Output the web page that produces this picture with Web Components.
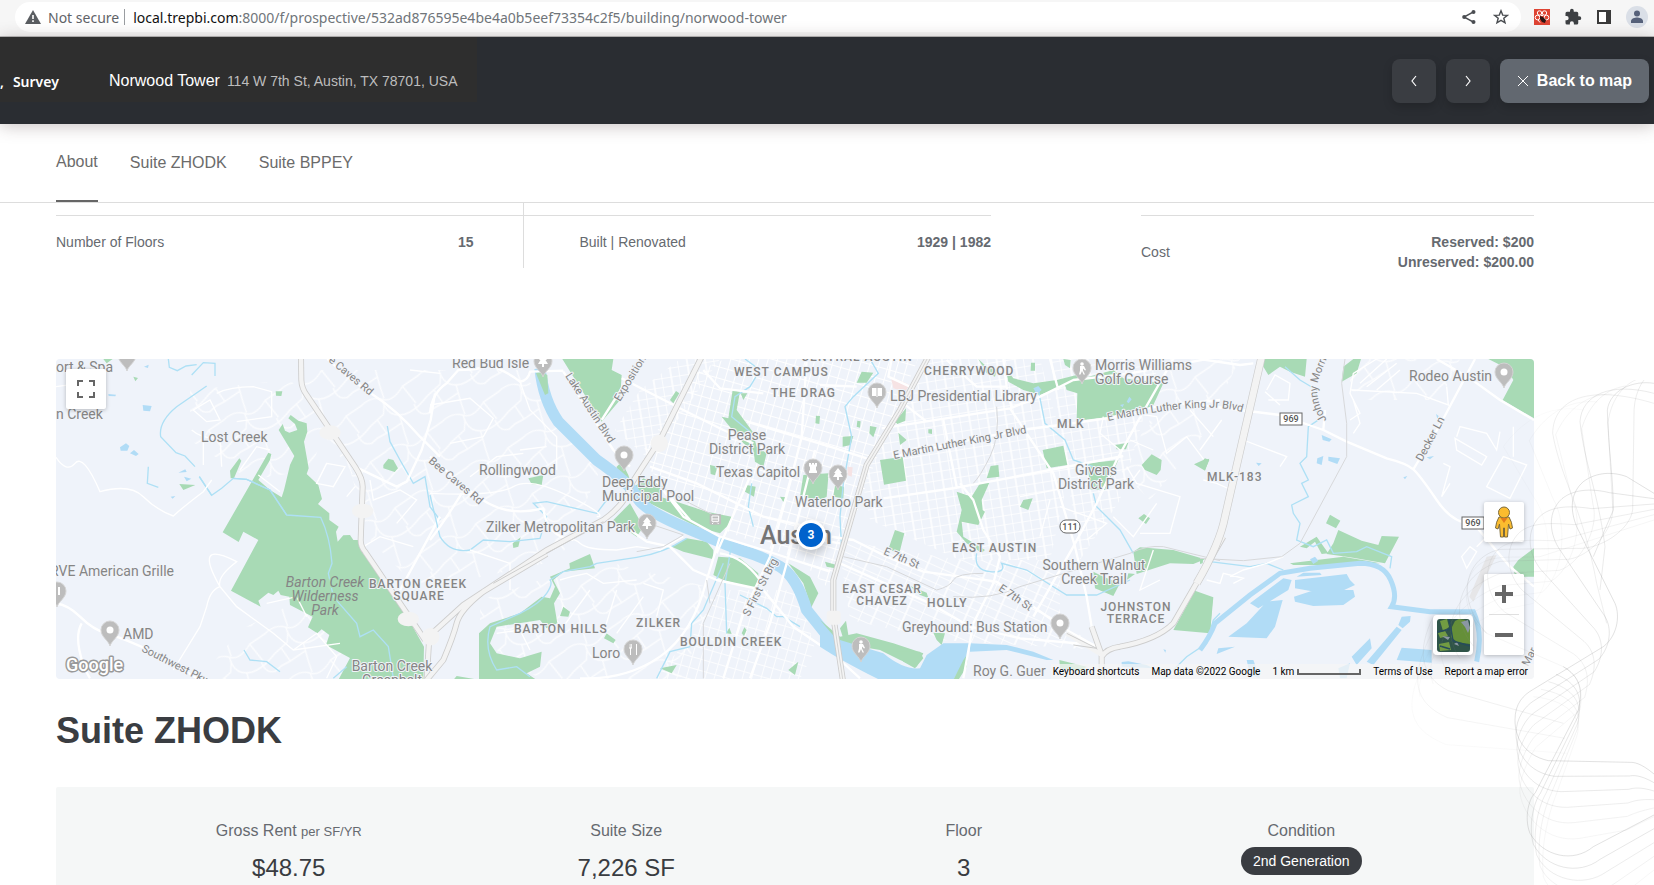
<!DOCTYPE html>
<html lang="en">
<head>
<meta charset="utf-8">
<title>Norwood Tower</title>
<style>
html,body{margin:0;height:100%}
body{font-family:"Liberation Sans",Arial,sans-serif;color:#666a70;background:#fff}
</style>
</head>
<body>
<survey-page></survey-page>
<script>
const define = (name, html, setup) => customElements.define(name, class extends HTMLElement {
  constructor() {
    super();
    const t = document.createElement('template');
    t.innerHTML = html;
    this.attachShadow({ mode: 'open' }).append(t.content.cloneNode(true));
    if (setup) setup(this.shadowRoot, this);
  }
});

/* ---------- browser toolbar ---------- */
define('browser-bar', `
<style>
:host{display:flex;align-items:flex-start;height:36px;background:#f6f6f6;border-bottom:1px solid #b9b9b9;font-family:"Noto Sans",sans-serif;font-size:14px;box-sizing:content-box}
form{flex:1;display:flex;align-items:center;height:30px;margin:2px 0 0 15px;padding:0 12px 0 10px;background:#fff;border-radius:15px;color:#5f6368}
button{border:0;background:none;padding:0;margin:0;display:flex;align-items:center;font:inherit;color:inherit}
.sec{gap:7px}
.bar{width:1px;height:16px;background:#9a9da1;margin:0 8px 0 5px}
label{color:#111}
input{flex:1;min-width:0;border:0;padding:0;outline:0;background:none;font:inherit;color:#70757a}
.in{gap:16px;display:flex}
.ext{display:flex;align-items:center;gap:14px;height:34px;padding:0 6px 0 13px}
svg{display:block}
</style>
<form>
 <button class="sec" type="button"><svg width="16" height="14" viewBox="0 0 16 14"><path d="M8 0L16 14H0z" fill="#5a5d61"/><path d="M7.2 5h1.6v4H7.2zM7.2 10.3h1.6v1.7H7.2z" fill="#fff"/></svg>Not secure</button>
 <span class="bar"></span>
 <label for="u">local.trepbi.com</label><input id="u" value=":8000/f/prospective/532ad876595e4be4a0b5eef73354c2f5/building/norwood-tower">
 <span class="in">
 <button type="button" aria-label="Share"><svg width="16" height="16" viewBox="0 0 16 16" fill="#4a4d51"><path d="M12.5 2.8L3 8l9.500 5.200" fill="none" stroke="#4a4d51" stroke-width="1.500"/><circle cx="12.500" cy="3" r="2"/><circle cx="3.200" cy="8" r="2"/><circle cx="12.500" cy="13" r="2"/></svg></button>
 <button type="button" aria-label="Bookmark"><svg width="16" height="16" viewBox="0 0 16 16"><path d="M8 1.800l1.700 4.300 4.600.3-3.500 2.900 1.200 4.500L8 11.300l-4 2.500 1.200-4.500L1.700 6.400l4.600-.3z" fill="none" stroke="#4a4d51" stroke-width="1.400"/></svg></button>
 </span>
</form>
<div class="ext">
 <button aria-label="Inspector extension"><svg width="16" height="16" viewBox="0 0 16 16"><path fill="#de4433" d="M0 0h16v16H0z"/><g fill="none" stroke="#fff"><circle cx="5.500" cy="4" r="2.200"/><circle cx="10.500" cy="4" r="2.200"/><circle cx="3.500" cy="8.500" r="2.300"/><circle cx="12.500" cy="8.500" r="2.300"/><path d="M4 11l2 2.500M7 6.500h2"/></g><path d="M6 7l3 1 3 3-1 3-3-1-2-3z" fill="#2b1514"/></svg></button>
 <button aria-label="Extensions"><svg width="18" height="18" viewBox="0 0 24 24" fill="#3d4043"><path d="M20.500 11H19V7a2 2 0 0 0-2-2h-4V3.500a2.500 2.500 0 0 0-5 0V5H4a2 2 0 0 0-2 2v3.800h1.500a2.700 2.700 0 0 1 0 5.400H2V20a2 2 0 0 0 2 2h3.800v-1.500a2.700 2.700 0 0 1 5.400 0V22H17a2 2 0 0 0 2-2v-4h1.500a2.500 2.500 0 0 0 0-5z"/></svg></button>
 <button aria-label="Side panel"><svg width="16" height="16" viewBox="0 0 16 16"><path d="M1 1h14v14H1z" fill="#3a3a3a"/><path d="M3 3h7v10H3z" fill="#fff"/></svg></button>
 <button aria-label="Profile"><svg width="22" height="22" viewBox="0 0 22 22"><circle cx="11" cy="11" r="11" fill="#dadfe7"/><circle cx="11" cy="7.500" r="3" fill="#56617a"/><path d="M5 17v-2c0-2.500 4-3.500 6-3.500s6 1 6 3.500v2z" fill="#56617a"/></svg></button>
</div>`);

/* ---------- dark header ---------- */
define('icon-button', `
<style>
:host{display:block}
button{display:flex;align-items:center;justify-content:center;gap:8px;height:44px;min-width:44px;padding:0;border:0;border-radius:8px;background:#3a3d42;color:#fff;font:bold 16px "Liberation Sans",Arial,sans-serif;box-shadow:0 4px 10px rgba(0,0,0,.18)}
:host([wide]) button{background:#626870;padding:0 17px}
</style><button><slot></slot></button>`, (root, el) => {
  const l = el.getAttribute('label'); if (l) root.querySelector('button').setAttribute('aria-label', l);
});

define('survey-header', `
<style>
:host{display:flex;align-items:center;height:87px;padding-right:5px;background:linear-gradient(90deg,#2e2e2e 477px,#2a2d32 477px);background-size:100% 65px;background-repeat:no-repeat;background-color:#2a2d32;position:relative;z-index:2;box-shadow:0 2px 16px rgba(60,40,40,.28)}
.brand{font:600 14px/20px "Noto Sans",sans-serif;color:#fff;display:flex;gap:9px;width:109px;box-sizing:border-box;padding-top:2px}
h1{margin:0;font-size:16px;font-weight:400;color:#fff;line-height:20px}
p{margin:0 auto 0 7px;font-size:14px;line-height:20px;color:#bdbdbd}
nav{display:flex;gap:10px}
svg{display:block;fill:none;stroke:#fff}
</style>
<div class="brand"><span>,</span><span>Survey</span></div>
<h1>Norwood Tower</h1><p>114 W 7th St, Austin, TX 78701, USA</p>
<nav>
<icon-button label="Previous building"><svg width="8" height="12" viewBox="0 0 8 12" stroke-width="1.200"><path d="M6 1L2 6l4 5"/></svg></icon-button>
<icon-button label="Next building"><svg width="8" height="12" viewBox="0 0 8 12" stroke-width="1.200"><path d="M2 1l4 5-4 5"/></svg></icon-button>
<icon-button wide><svg width="12" height="12" viewBox="0 0 12 12"><path d="M1 1l10 10M11 1L1 11"/></svg>Back to map</icon-button>
</nav>`);

/* ---------- section tabs ---------- */
define('section-tabs', `
<style>
:host{display:flex;gap:32px;height:78px;padding:0 56px;border-bottom:1px solid #ddd;background:#fff}
a{display:block;line-height:78px;font-size:16px;color:#6b6b6b;text-decoration:none}
a.on{line-height:76px;height:76px;border-bottom:2px solid #666}
</style>
<a class="on" href="#about">About</a><a href="#zhodk">Suite ZHODK</a><a href="#bppey">Suite BPPEY</a>`);

/* ---------- building facts ---------- */
define('fact-row', `
<style>
:host{display:block;box-sizing:border-box;padding-top:12px}
dl{margin:0;display:flex;justify-content:space-between;align-items:center;border-top:1px solid #ddd;padding-top:16px;font-size:14px;line-height:20px}
dd{margin:0;font-weight:bold;text-align:right}
</style><dl><dt><slot name="label"></slot></dt><dd><slot></slot></dd></dl>`);

define('fact-grid', `
<style>
:host{display:grid;grid-template-columns:935fr 393fr;grid-template-rows:65px;column-gap:150px}
.pair{display:grid;grid-template-columns:1fr 1fr}
.a{border-right:1px solid #ddd}
.pair dl{margin:12px 0 0;display:flex;justify-content:space-between;border-top:1px solid #ddd;padding:16px 0 0;font-size:14px;line-height:20px}
.pair .a dl{padding-right:49px}.pair .b dl{padding-left:56px}
dd{margin:0;font-weight:bold}
</style>
<div class="pair"><div class="a"><dl><dt>Number of Floors</dt><dd>15</dd></dl></div><div class="b"><dl><dt>Built | Renovated</dt><dd>1929 | 1982</dd></dl></div></div>
<fact-row><span slot="label">Cost</span>Reserved: $200<br>Unreserved: $200.00</fact-row>`);

/* ---------- map ---------- */
const pins = [[127,355,''],[110,630,'o'],[57,591,'H'],[543,361,'t'],[624,455,'o'],[647,523,'t'],[813,468,'c'],[633,649,'f'],[877,392,'b'],[1082,368,'g'],[838,474,'t'],[1060,623,'o'],[861,646,'g'],[1504,372,'o']];
const glyph = {
  '':'', o:'<circle r="3.500"/>', t:'<path d="M0-6L4-1H2.500L5 3H1v3h-2V3h-4L-2.500-1H-4z"/>', c:'<path d="M-4-5h2v1.500h1V-5h2v1.500h1V-5h2v3L3-1v3l1 1v2h-8V3l1-1v-3l-1-1z"/>',
  f:'<path d="M-4-5v4l1 1v6h1V0l1-1v-4h-.7v3.500h-.8V-5h-.8v3.500h-.7V-5zM3-5v11h1V-5z"/>', b:'<path d="M-5-4h4l1 1 1-1h4v8H1L0 5l-1-1h-4z"/><path d="M0-3v7" stroke="#c0c0c0"/>',
  g:'<circle cy="-4" r="1.800"/><path d="M-2-2h4l2 4-1 .5-2-2v2l2 4H1.500L0 3l-1.500 3.500H-3l1-4z"/>', H:'<path d="M1-4h2v8H1z"/>'
};
const pinSvg = pins.map(([x,y,k]) => `<g transform="translate(${x} ${y})"><path d="M0 16C-1 11-9 7-9 0A9 9 0 0 1 9 0C9 7 1 11 0 16z" fill="#bdbdbd" stroke="#d4d4d4" stroke-width="1"/><g fill="#fff">${glyph[k]}</g></g>`).join('');

const T = (x, y, s, c = 'p', a = '', r = 0) => `<text class="${c}" ${a ? `text-anchor="${a}"` : ''} ${r ? `transform="translate(${x} ${y}) rotate(${r})"` : `x="${x}" y="${y}"`}>${s}</text>`;
const labels = [
 T(56,372,'ort &amp; Spa'),T(56,419,'n Creek'),T(201,442,'Lost Creek'),T(174,576,'RVE American Grille','p','end'),T(123,639,'AMD'),
 T(325,587,'Barton Creek','p i','middle'),T(325,601,'Wilderness','p i','middle'),T(325,615,'Park','p i','middle'),T(392,671,'Barton Creek','p','middle'),T(392,685,'Greenbelt','p','middle'),
 T(418,588,'BARTON CREEK','n','middle'),T(419,600,'SQUARE','n','middle'),T(452,368,'Red Bud Isle'),T(479,475,'Rollingwood'),T(602,487,'Deep Eddy'),T(602,501,'Municipal Pool'),
 T(486,532,'Zilker Metropolitan Park'),T(747,440,'Pease','p','middle'),T(747,454,'District Park','p','middle'),T(716,477,'Texas Capitol'),T(795,507,'Waterloo Park'),
 T(734,376,'WEST CAMPUS','n'),T(771,397,'THE DRAG','n'),T(857,361,'CENTRAL AUSTIN','n','middle'),T(636,627,'ZILKER','n'),T(514,633,'BARTON HILLS','n'),T(680,646,'BOULDIN CREEK','n'),T(592,658,'Loro'),
 T(924,375,'CHERRYWOOD','n'),T(890,401,'LBJ Presidential Library'),T(1095,370,'Morris Williams'),T(1095,384,'Golf Course'),T(1057,428,'MLK','n'),
 T(1096,475,'Givens','p','middle'),T(1096,489,'District Park','p','middle'),T(952,552,'EAST AUSTIN','n'),T(1094,570,'Southern Walnut','p','middle'),T(1094,584,'Creek Trail','p','middle'),
 T(882,593,'EAST CESAR','n','middle'),T(882,605,'CHAVEZ','n','middle'),T(927,607,'HOLLY','n'),T(1136,611,'JOHNSTON','n','middle'),T(1136,623,'TERRACE','n','middle'),
 T(902,632,'Greyhound: Bus Station'),T(973,676,'Roy G. Guer'),T(1409,381,'Rodeo Austin'),T(1207,481,'MLK-183','n'),T(760,544,'Austin','city'),
 T(141,651,'Southwest Pkwy','r','',27),T(328,361,'e Caves Rd','r','',40),T(428,462,'Bee Caves Rd','r','',40),T(565,376,'Lake Austin Blvd','r','',57),T(620,402,'Exposition','r','',-59),
 T(749,617,'S First St Brg','r','',-63),T(894,459,'E Martin Luther King Jr Blvd','r','',-11),T(883,554,'E 7th St','r','',23),T(998,590,'E 7th St','r','',34),T(1422,462,'Decker Ln','r','',-62),T(1528,667,'Mar','r','',-62),
 '<text class="r"><textPath href="#mlk">E Martin Luther King Jr Blvd</textPath></text><text class="r"><textPath href="#jm">Johnny Morris</textPath></text>'
].join('');

define('area-map', `
<style>
:host{display:block;position:relative;height:320px;border-radius:4px;overflow:hidden;background:#eff3fa;font-family:Roboto,sans-serif}
.canvas{display:block;width:100%;height:100%}
text{font-family:Roboto,sans-serif;fill:#858585;stroke:#f1f4f9;stroke-width:2px;paint-order:stroke;stroke-linejoin:round}
.p{font-size:14px}.i{font-style:italic;stroke:#a8dab5}.n{font-size:12px;font-weight:500;letter-spacing:1px}.r{font-size:11px}.city{font-size:25px;font-weight:500;fill:#757575}
.s{font-size:9px;fill:#555;stroke:none;font-weight:500}.logo{font-size:18px;font-weight:500;fill:#fff;stroke:#999;stroke-width:3px}
.g{fill:#a8dab5}.w{fill:#b1dcf6}.wl{fill:none;stroke:#aee0f5;stroke-width:4}.wb{fill:none;stroke:#b1dcf6}
.rd{fill:none;stroke:#fff;stroke-width:7;stroke-linejoin:round}.rm{fill:none;stroke:#fff;stroke-width:4}.hc{fill:none;stroke:#cdcdcd;stroke-width:18}.hf{fill:none;stroke:#f3f3f3;stroke-width:13}.rl{fill:none;stroke:#d7d8da;stroke-width:3}
button{position:absolute;border:0;padding:0;background:#fff;width:40px;height:40px;border-radius:2px;box-shadow:0 1px 4px rgba(0,0,0,.25);display:flex;align-items:center;justify-content:center}
.full{left:10px;top:10px}.peg{right:10px;top:143px}
.zoom{position:absolute;right:10px;top:215px;width:40px;background:#fff;border-radius:2px;box-shadow:0 1px 4px rgba(0,0,0,.25)}
.zoom button{position:static;box-shadow:none}.zoom hr{border:0;height:1px;background:#e0e0e0;margin:0 5px}
.sat{right:61px;top:256px;border-radius:4px;box-shadow:0 2px 8px rgba(0,0,0,.35)}
.mark{left:calc(50% + 4px);top:164px;width:24px;height:24px;border-radius:50%;background:#0062cc;color:#fff;font:bold 12px Roboto,sans-serif;box-shadow:0 0 0 3px #fff,0 4px 10px 4px rgba(0,0,0,.2)}
footer{position:absolute;right:0;bottom:0;display:flex;align-items:center;gap:12px;height:15px;padding:0 6px 0 2px;background:rgba(245,245,245,.75);font-size:10px;color:#000}
footer button{position:static;width:auto;height:auto;background:none;box-shadow:none;font:inherit;color:inherit}
footer a{color:inherit;text-decoration:none}
.scale{display:flex;align-items:center;gap:3px}.scale i{width:60px;height:4px;border:2px solid #666;border-top:0}
</style>
<svg class="canvas" viewBox="56 359 1478 320" preserveAspectRatio="xMidYMid slice" role="img" aria-label="Map of Austin">
<defs>
<pattern id="d" width="9" height="11" patternUnits="userSpaceOnUse" patternTransform="rotate(16)"><path d="M0 0H9M0 0V11" stroke="#fff" stroke-width="2"/></pattern>
<pattern id="e" width="18" height="9" patternUnits="userSpaceOnUse" patternTransform="rotate(-9)"><path d="M0 0H18M0 0V9M10 0V9" stroke="#fff" stroke-width="1.500" fill="none"/></pattern>
<pattern id="f" width="28" height="8" patternUnits="userSpaceOnUse" patternTransform="rotate(24)"><path d="M0 0H28M0 0V8M13 0V8" stroke="#fff" stroke-width="1.500" fill="none"/></pattern>
<pattern id="h" width="64" height="52" patternUnits="userSpaceOnUse" patternTransform="rotate(-28)"><path d="M0 8Q14 4 22 12T46 10L64 8M22 12Q18 28 30 34T64 30M30 34L26 52M26 0L24 12M46 10L50 31M0 30L16 26L22 16M8 28L10 44L28 42M48 31Q46 44 56 46L64 44M0 44L10 44" fill="none" stroke="#fff" stroke-width="1.400"/></pattern>
<path id="mlk" d="M1108 421Q1160 410 1195 408T1250 415"/><path id="jm" d="M1327 420Q1312 395 1320 375T1336 340"/>
</defs>
<g fill="url(#h)" opacity=".8">
<path d="M190 390L290 380 330 420 310 470 250 480 190 440zM300 600L345 640 340 679 200 679 240 630zM300 370H520L600 470 560 560 420 590 370 540 350 470 320 430zM480 600L600 560 720 590 680 679H540L480 640zM1170 359H1240L1200 440 1150 500 1120 470 1150 420zM1350 359L1460 359 1440 400 1350 400z"/></g>
<path fill="url(#d)" d="M700 370L725 359H918L868 480 830 590 800 560 760 545 700 520 650 470 640 455z"/>
<path fill="url(#e)" d="M930 359H1040L1070 470 1050 560 960 560 870 520 862 480 890 425z"/>
<path fill="url(#e)" d="M640 390L680 359H720L650 460 615 430zM1050 359H1160L1120 500 1080 560z"/>
<path fill="url(#f)" d="M838 540L900 550 960 560 1060 560 1060 620 1100 650 940 640 850 620z"/>
<path fill="url(#d)" d="M720 590L800 590 815 650 800 679H650L690 640z" opacity=".8"/>

<g transform="translate(40 350) scale(.33333)">
<path class="g" d="M716 240L728 222 735 242 748 248 772 240 765 222 745 205 752 195 775 212 800 220 802 245 792 275 800 320 806 355 800 372 835 405 846 447 834 462 868 490 868 510 896 530 888 545 893 575 910 556 930 555 940 570 955 570 962 600 1090 780 1152 890 1150 990H895L930 924 858 885 868 855 845 838 832 850 804 832 818 800 750 765 748 740 722 735 715 722 700 735 685 728 655 752 662 770 573 722 655 570 610 545 596 576 548 547 685 308 694 312 690 330 655 390 690 420 725 442 732 420 750 345 763 318zM570 362L598 325 604 332 582 385 572 385zM418 402L466 405 430 420zM707 124L727 124 724 138 708 137zM1030 345L1045 326 1060 330 1074 355 1064 366 1030 355zM190 27H218L200 40zM280 80L294 84 286 94z"/>
<path class="wl" d="M385 27L388 52 412 62 438 48 470 44M455 75L490 38 525 40 525 78M500 108L410 170Q355 215 362 260L408 308 435 318 465 350M478 380L515 436 545 415 580 385 620 388 690 420 740 495 842 502Q870 560 876 640L865 670 880 740 950 820 960 860 1000 840 1045 890 1060 985M612 900L630 930 680 935 720 965M1042 228L1050 275 1080 330 1120 400 1155 380 1170 470 1200 510M325 350L322 400 355 412M880 985L920 950"/>
<path class="wl" stroke-width="7" d="M478 380L515 436M580 385L620 388 690 420 740 495"/>
<path class="w" d="M240 292L258 280 268 288 262 302 242 302zM270 310L282 300 296 312 288 318zM308 165L335 168 330 184 310 182zM415 368L436 358 440 366zM432 380L454 386 440 394zM312 50L326 44 324 54zM205 132L228 134 226 139 206 138zM392 440L406 438 398 446z"/>
<path class="rd" d="M40 760Q80 760 120 800T200 850Q330 890 470 985M125 820Q108 850 118 900T150 985M862 27Q930 90 1000 135T1140 260L1200 320M945 350L1070 410 1100 395 1145 300 1172 210 1185 130M1200 500L1080 720M300 990"/>
<path class="rm" d="M48 322Q80 370 105 340T180 425Q270 400 310 440T400 498Q430 470 490 425L515 390M540 710Q500 640 510 620T590 635Q530 680 540 710L590 770 700 850 760 900 900 880M540 710Q510 720 500 770L480 830 400 960M48 110L120 100M490 345V270M455 240Q490 270 540 262L545 350M530 130Q570 110 640 110L695 125V200L590 215M460 180L510 150 540 210 500 215zM600 360L650 290 690 300M655 375L720 425M860 340L915 350 880 410 830 400zM920 440L945 410M990 390L1000 450 1080 420 1130 450 1070 520M680 760L770 740 800 800M760 900L830 850 890 920 860 985M1110 60L1200 70M970 590L1020 560 1120 590"/>
<path class="hc" d="M783 20L784 90Q785 115 800 135L945 350Q968 385 968 410L962 570Q962 590 975 605L1155 870M1160 990L1168 860"/><path class="hf" d="M783 20L784 90Q785 115 800 135L945 350Q968 385 968 410L962 570Q962 590 975 605L1155 870M1160 990L1168 860"/>
<g fill="#f3f3f3"><ellipse cx="870" cy="248" rx="32" ry="22"/><ellipse cx="968" cy="483" rx="32" ry="22"/><ellipse cx="1105" cy="807" rx="32" ry="22"/><circle cx="1172" cy="860" r="26"/></g>
</g>

<g transform="translate(430 350) scale(.33333)">
<path class="g" d="M397 27H550L545 60 575 75 570 150 515 215 430 80zM147 850L180 820 270 790 335 740 360 745 375 710 360 680 420 655 418 640 480 612 495 655 400 665 370 690 390 730 372 760 382 820 350 835 330 810 200 830 180 880 200 910 270 925 335 905 330 950 290 970 320 990H147zM70 990L80 978 150 990zM295 385L340 375 335 405 305 403zM248 580L272 562 265 590 250 594zM400 770L420 785 415 800 390 798zM530 850L557 870 550 880 522 865zM908 120L930 125 920 180 968 245 980 290 1010 310 1000 350 975 335 970 300 940 280 895 225 875 200 895 205zM932 130L952 130 940 150zM720 150L738 123 748 130 730 160zM840 345L862 350 855 376 842 372zM560 350L575 335 595 375 600 390 560 365zM545 515L600 460 640 530 620 560 560 520zM640 385L700 410 690 440 740 455 830 485 905 500 895 525 870 550 800 530 720 490 640 450 605 420zM725 590L770 565 830 575 850 600 850 628 760 605zM865 620L930 625 985 670 985 720 880 690 850 675zM1120 375L1195 370 1180 450 1110 440zM950 405L977 410 972 440 945 425zM1050 440L1066 442 1060 456zM1075 640L1140 680 1165 730 1140 780 1200 850 1165 840 1120 700zM935 850L943 832 950 840 942 858zM888 850L898 833 905 852zM690 955L740 945 725 970zM1075 960L1105 935 1095 975zM1158 197L1170 198 1168 222 1156 220z"/>
<path class="wb" stroke-width="34" d="M330 55Q340 150 385 215L500 330Q600 400 620 440T760 530T930 600Q1000 620 1050 650T1130 780 L1210 880" stroke-linejoin="round"/>
<path class="wl" stroke-width="8" d="M500 640L620 622Q700 610 770 565M350 730Q370 700 360 690L400 665 480 650 500 640M350 730Q330 760 270 790L180 830Q160 900 200 960L260 950 300 980M0 435L30 560Q60 610 120 600L160 570 240 575 330 565 350 500 310 460 350 455 500 490 530 450M945 27L990 60 960 110 915 140 905 200 960 245M880 640L820 780 785 820 780 890 720 905 680 985M905 580L885 700 890 850M930 735L960 750 1010 775 1040 800 1060 800 1110 830M965 400L955 470 970 530"/>
<path class="g" d="M318 70Q330 60 352 75L355 130 345 135z"/>
<path class="rd" d="M0 190Q5 130 50 100L85 60Q160 60 190 40M190 50Q240 70 270 95 295 90 300 65L400 62M400 65L550 300 600 350M0 320Q80 390 130 430T230 480 340 475Q350 560 430 570M515 210L630 30M575 85L760 180 880 240 970 280M0 570Q40 520 95 430M600 540L650 575 720 590 790 660 860 690 1000 720 1090 830 1200 905M660 350L800 400 1000 500 1200 545M680 395L760 500 870 560 1000 600 1200 665M720 440L780 510M1070 640L1020 820 960 985M1020 620L940 790 880 985M870 560L830 690Q790 850 690 920T450 985M870 610Q940 620 990 690M1130 30L1115 260 1080 400 1020 620M820 60L870 115 1000 130M950 215L1200 290M1155 300L1070 640M960 380L860 610"/>
<path class="rm" d="M0 165L120 145 190 205 160 260 60 280M270 95L300 180 380 260 380 360M0 430Q200 440 250 410T420 440 500 500M120 380L200 320 280 310M270 300L350 290M120 600L240 640 240 720M390 690Q420 680 470 670L520 700 620 690M200 850L270 840 300 900M400 830L480 720M560 720L520 850M390 570Q430 560 450 580T560 600L620 590 690 600 760 560M640 700L700 720 680 800M640 740L560 850"/>
<path class="rl" d="M620 605L700 590 760 555 640 515M830 690L840 760M650 385L780 460 860 500M900 640L820 820 820 985"/>
<path class="hc" d="M-10 865L100 765 350 600 520 510Q590 460 605 400L690 270 815 20M-10 990L40 930Q70 860 80 820T160 725L350 612"/><path class="hf" d="M-10 865L100 765 350 600 520 510Q590 460 605 400L690 270 815 20M-10 990L40 930Q70 860 80 820T160 725L350 612"/>
<path d="M190 700L520 515" stroke="#cdcdcd" stroke-width="3"/>
<g fill="#f3f3f3"><circle cx="688" cy="280" r="26"/><circle cx="2" cy="860" r="26"/></g>
<rect x="839" y="492" width="34" height="32" rx="4" fill="#bdbdbd"/><path d="M846 498H866V514H846zM850 518L846 522M862 518L866 522" stroke="#fff" stroke-width="3" fill="none"/><path d="M846 507H866" stroke="#fff" stroke-width="3"/>
</g>

<g transform="translate(820 350) scale(.33333)">
<path fill="#f6e3e4" d="M212 80L270 105 255 125 220 115zM82 350L98 352 95 380 84 376z"/>
<path class="g" d="M557 55L580 85 640 100 710 90 770 75 790 85 880 60 910 85 1030 100 1000 165 960 190 770 212 772 130 740 120 735 105 660 135 610 120 565 95zM633 38L645 38 645 62 632 62zM475 27L500 50 530 60 525 80 500 70zM730 27L752 30 750 55 735 45zM110 98L125 65 160 68 140 98zM150 228L170 232 160 262 148 250zM112 212L122 214 120 233 110 230zM68 260L100 258 92 285 68 290zM225 215L258 175 256 212 232 222zM180 330L248 320 258 392 192 404zM668 300L730 287 742 345 680 355zM885 285L925 278 918 298 890 298zM803 340L895 330 855 420 810 418zM965 345L995 313 1025 330 1022 360 1010 375 975 360zM1122 343L1145 332 1168 326 1155 362zM500 385L512 348 535 345 538 380zM410 425L455 440 480 400 508 398 485 450 488 480 495 485 475 525 425 515 430 560 495 600 485 608 440 580 410 545 425 480zM600 470L610 450 638 445 625 480zM225 540L253 550 238 610 205 598zM955 505L972 492 990 505 978 522zM940 605L960 592 1060 600 1155 628 1120 642 1050 640 950 672zM820 665L850 680 900 700 880 738 825 715zM945 672L920 690 925 670zM1125 722L1180 742 1170 850 1060 840zM60 835L78 812 86 860 68 860zM340 848L375 850 365 885 350 870zM270 708L320 728 325 744 300 735zM15 635L50 645 45 655 20 650zM0 370L25 380 20 440 0 450zM45 405L72 410 70 445 40 440zM0 810L60 860 110 850 220 880 310 910 290 950 240 930 180 900 60 880zM718 930L800 950 780 965 720 955zM235 248L260 270 240 285zM325 238L336 238 336 252 325 250z"/>
<path class="w" d="M0 830L60 870 190 910Q250 960 300 955L320 915 370 880 450 880 440 920 400 990H180Q60 930 0 890zM450 880L560 885 640 905 700 930 680 930 560 900 450 905z"/>
<path class="g" d="M225 905L300 905 310 925 285 955 250 935zM430 930L445 910 440 950 415 990H400z"/>
<path class="wl" stroke-width="7" d="M470 610Q460 660 510 665T545 640L620 660 740 735 830 735 930 690M150 27L175 70 100 140 75 170 95 260 70 400 60 500 65 600M655 120L675 220 735 270 760 330 820 350M820 430L830 470 900 540 940 610M1030 990L1100 920 1160 880 1180 810 1200 790"/>
<path class="w" d="M920 155L928 140 935 148 926 160zM900 165L912 162 908 172zM1030 898L1038 900 1036 908zM905 936L925 934 980 945 1000 955 905 950zM640 115L655 108 665 120 650 132z"/>
<path class="rd" d="M185 235L570 175 660 140 760 90 930 70 1160 27M570 175L700 370 765 590 800 740 820 860M550 27L560 110 575 175M690 27L715 120M190 445L400 415 560 385 910 318M220 320L470 265 600 240 720 225 860 205 1010 170 1200 150M1060 27L950 220 890 330 830 460 760 590 640 800M0 555L100 570 200 620 310 665 530 695 640 770 740 840 830 890M0 570L60 580M420 400L460 450 490 540 540 620 520 700 460 820 430 985M0 280L140 325M60 640L330 760 450 830 600 865 830 885M250 160L320 215M370 210L410 410M0 105L110 110M215 27L205 80 270 110M60 930L120 985M380 30L470 110 560 110"/>
<path class="rm" d="M850 200L840 250 900 300M940 190L1010 200 1040 310 1100 260 1160 340M930 270L1000 300M920 350L950 400 1080 440 1050 550 960 550M880 500L940 560 1010 460M1000 600L960 720 1020 690M600 440L760 410M660 560L690 450M960 360L930 400M1110 180L1180 260M720 470L860 520 800 570"/>
<path class="rl" d="M530 170Q540 260 510 320T460 400M70 620L200 650 350 720Q390 710 400 690T490 670M400 740Q520 750 600 710L930 610Q980 585 1030 590L1200 632"/>
<path class="hc" d="M325 20L240 180 140 345 40 690V800L70 1000"/><path class="hf" d="M325 20L240 180 140 345 40 690V800L70 1000"/><path d="M325 20L240 180 140 345 40 690V800L70 1000" fill="none" stroke="#d4d4d4" stroke-width="3"/>
<path class="hc" d="M845 1000V920Q860 895 900 890 1010 870 1060 820L1210 560M845 915L815 830"/><path class="hf" d="M845 1000V920Q860 895 900 890 1010 870 1060 820L1210 560M845 915L815 830M845 915L740 850"/>
<path d="M760 885L830 895M740 850L830 895" stroke="#cdcdcd" stroke-width="3"/><rect x="20" y="782" width="42" height="42" rx="10" fill="#f3f3f3"/>
</g>

<g transform="translate(1200 350) scale(.33333)">
<path class="g" d="M190 27H320L315 80 270 65 240 50 205 75 190 50zM425 95L430 50 460 27H483L470 70zM865 27H1002V205L908 150 940 90 920 55zM390 494L421 512 408 535 378 520zM415 540L485 572 535 585 545 558 597 560 555 640 450 622 380 612 400 580zM300 590L350 560 385 610 365 612 345 575 320 595zM270 640L430 620 500 632 540 640 380 645 280 645zM940 650L955 630 1002 595V680H945zM0 340L15 325 28 330 15 360zM0 730L38 745 30 850 0 840zM0 625L10 625 8 640 0 642z"/>
<path class="w" d="M150 760L250 685 275 690 265 720 175 775zM85 860L140 820 200 755 248 750 225 830 200 865zM285 690L440 672 450 690 465 705 400 735 285 715zM282 740L350 718 460 720 465 740 430 765 340 768 285 755zM290 680L365 675 360 668 310 668zM455 920L510 865 515 895 470 945zM500 935L590 830 605 840 520 945zM605 800L632 798 630 815 608 835 595 825zM605 893L695 900V938L590 930zM55 895L105 890 50 912zM140 930L160 930 180 985 150 975zM385 320L420 325 412 342 385 332zM352 325L370 318 365 345 350 340zM365 255L395 268 388 275 368 270zM330 628L345 620 355 632 340 642zM680 322L702 318 690 328zM708 192L716 198 712 206zM610 382L622 378 615 388zM168 338L185 340 176 348zM415 955L450 940 440 985H420z"/>
<path class="wb" stroke-width="15" d="M0 900Q30 860 45 820L150 735 240 670 330 655 480 640Q550 640 572 690T575 770L690 785 820 785Q850 850 830 935"/>
<path class="wl" stroke-width="5" d="M255 50L300 90 350 120 345 180 370 200 325 230 320 320 300 340 325 390 305 400 325 440 275 465 280 490 300 520 290 570 340 590 380 570 400 610 470 605 500 590 550 610 575 620 570 655M30 635L150 650 200 640 250 660"/>
<path class="rd" d="M0 165L120 180 240 195 370 240 440 275 560 325Q620 340 640 358T710 450T820 520L930 650 1002 710M640 358L720 225 825 27M710 27L810 85 900 150 1002 210M0 27L120 45 160 40M370 240L375 180"/>
<path class="rm" d="M200 120L225 75 270 100 265 150 205 150M195 125L240 165M450 210L480 190 450 130 460 70 530 27M455 120L650 130 745 165 740 110M460 150L480 220 460 250M770 260L780 230 860 250 890 300 900 245M765 265L860 320 845 345 770 300zM730 340L750 350 725 440 750 400M860 410L910 320 980 345 930 445zM0 300L65 210M130 270L260 320 240 350M10 390L50 400 95 420M250 620L200 640 130 660 90 680M20 690L60 700 70 670 130 685 100 700M785 620L810 590 830 605 800 655zM830 590L860 560M940 230L940 320M480 100L560 27M500 110L590 40M530 120L600 60"/>
<path d="M860 620L890 615 820 755 808 740z" fill="#e6e6e8"/>
<path class="rl" d="M435 27L425 100 440 220V320L300 580 245 620 130 632 0 625"/>
<path class="hc" d="M185 20L75 500Q60 580 -10 700" style="stroke-width:24"/><path class="hf" d="M185 20L75 500Q60 580 -10 700" style="stroke-width:20"/>
</g>
${labels}${pinSvg}
<g fill="#fff" stroke="#666"><rect x="1060" y="520" width="20" height="13" rx="6"/><rect x="1280" y="413" width="22" height="12"/><rect x="1462" y="517" width="22" height="12"/></g>
<text class="s" text-anchor="middle" x="1070" y="530">111</text><text class="s" text-anchor="middle" x="1291" y="422">969</text><text class="s" text-anchor="middle" x="1473" y="526">969</text>
<text class="logo" x="66" y="671">Google</text>
</svg>
<button class="full" aria-label="Fullscreen"><svg width="18" height="18" fill="none" stroke="#666" stroke-width="2"><path d="M6 1H1V6M12 1H17V6M17 12V17H12M6 17H1V12"/></svg></button>
<button class="mark">3</button>
<button class="peg" aria-label="Street View"><svg width="20" height="32" viewBox="0 0 20 32" fill="#fbbc2f" stroke="#7c6a3a" stroke-width="1"><path d="M5 11H15Q18 16 18.500 22L16 23 14.500 18 13.500 31H10.500V22H9.500V31H6.500L5.500 18 4 23 1.500 22Q2 16 5 11z"/><circle cx="10" cy="6.500" r="5.500"/><path d="M6.500 12H13.500L10 17z" fill="#e37b1c" stroke="none"/></svg></button>
<div class="zoom"><button aria-label="Zoom in"><svg width="18" height="18"><path d="M7 0h4v7h7v4h-7v7H7v-7H0V7h7z" fill="#666"/></svg></button><hr><button aria-label="Zoom out"><svg width="18" height="18"><path d="M0 7h18v4H0z" fill="#666"/></svg></button></div>
<button class="sat" aria-label="Satellite view"><svg width="33" height="33" viewBox="0 0 33 33"><rect width="33" height="33" rx="3" fill="#2f5448"/><path d="M15 8L18 2 22 0 28 1 33 8V25L26 24 20 23 14 18z" fill="#658f38"/><path d="M3 2L10 0 12 8 6 12zM2 25L12 23 14 31 3 32zM1 14L8 12 11 17 3 19z" fill="#729c42"/><path d="M24 3L31 1 33 9 31 14 28 8zM5 17L13 18 11 21zM17 25L20 23 22 27z" fill="#8b97a3"/><path d="M0 13L14 10 16 22 33 27M3 27L13 30M12 0L14 12" stroke="#264c5b" fill="none" stroke-width="1.500"/></svg></button>
<footer><button>Keyboard shortcuts</button><span>Map data ©2022 Google</span><span class="scale">1 km <i></i></span><a href="#terms">Terms of Use</a><a href="#report">Report a map error</a></footer>`);

/* ---------- suite summary ---------- */
define('suite-stat', `
<style>
:host{display:flex;flex-direction:column;align-items:center;gap:10px;font-size:16px;line-height:20px}
.v{font-size:24px;line-height:34px;color:#393c41}
:host([badge]){gap:6px}
:host([badge]) .v{font-size:14px;line-height:28px;padding:0 12px;border-radius:14px;background:#3a3d42;color:#fff}
</style><div><slot name="label"></slot></div><div class="v"><slot></slot></div>`);

define('suite-panel', `
<style>
:host{display:block}
h2{margin:0;padding:31px 0 35px;font-size:36px;line-height:42px;color:#3a3d42}
section{display:grid;grid-template-columns:repeat(4,1fr);padding:34px 64px;background:#f5f7f7;border-radius:2px}
small{font-size:13px;line-height:16px}
</style>
<h2 id="zhodk">Suite ZHODK</h2>
<section>
<suite-stat><span slot="label">Gross Rent <small>per SF/YR</small></span>$48.75</suite-stat>
<suite-stat><span slot="label">Suite Size</span>7,226 SF</suite-stat>
<suite-stat><span slot="label">Floor</span>3</suite-stat>
<suite-stat badge><span slot="label">Condition</span>2nd Generation</suite-stat>
</section>`);

/* ---------- decorative line waves ---------- */
define('line-waves', `
<style>:host{display:block;position:absolute;right:0;top:177px;width:244px;height:505px;pointer-events:none;overflow:hidden}svg{display:block}</style>
<svg width="244" height="505"><g transform="translate(-210 -30) scale(.33333)" fill="none" stroke="#8c8c8c" stroke-width="3"></g></svg>`, root => {
  const g = root.querySelector('g');
  const blend = (cmds, a, b, n, o1, o2) => {
    for (let k = 0; k < n; k++) {
      const t = k / (n - 1); let i = 0;
      const d = cmds.replace(/#/g, () => { const v = Math.round(a[i] + (b[i] - a[i]) * t); i++; return v; });
      const p = document.createElementNS('http://www.w3.org/2000/svg', 'path');
      p.setAttribute('d', d); p.setAttribute('opacity', o1 + (o2 - o1) * t); g.append(p);
    }
  };
  blend('M# #C# # # # # #L# #C# # # # # #C# # # # # #L# #C# # # # # #L# #C# # # # # #C# # # # # #L# #',
   [1362,1272,1320,1237,1300,1237,1290,1237,1045,1232,970,1215,945,1160,945,1110,945,1060,970,1035,1000,1018,1210,890,1250,860,1262,800,1245,760,1130,530,1110,480,1110,430,1150,395,1190,365,1240,365,1280,380,1362,430],
   [1362,1400,1320,1420,1300,1430,1280,1440,1140,1465,1040,1480,970,1400,960,1330,955,1280,1000,1200,1010,1190,1140,1080,1150,1020,1140,980,1090,950,860,850,790,800,780,700,830,650,870,610,960,625,1020,620,1362,510], 6, .26, .08);
  blend('M# #L# #C# # # # # #C# # # # # #L# #C# # # # # #',
   [1362,1395,1180,1490,1120,1540,1030,1520,990,1450,970,1400,990,1340,1005,1330,1135,1080,1150,1020,1140,980,1090,950],
   [1362,1560,1260,1640,1180,1690,1060,1660,1030,1580,1020,1480,1050,1380,1070,1330,1130,1160,1150,1100,1100,1050,1000,1040], 5, .26, .07);
  blend('M# #C# # # # # #L# #C# # # # # #L# #C# # # # # #',
   [1362,60,1320,90,1300,140,1302,200,1298,480,1290,540,1200,600,1130,595,900,598,800,620,760,740,860,850],
   [1150,180,1040,160,960,220,910,290,1000,440,1060,520,1060,700,1000,760,900,780,740,860,640,960,660,1040], 6, .16, .04);
  blend('M# #C# # # # # #C# # # # # #L# #', [1362,100,1300,90,1230,120,1222,180,1225,300,1240,380,1240,480,1180,620], [1362,160,1160,100,1060,150,1058,250,1080,380,1150,480,1190,700,1220,820], 3, .22, .14);
  blend('M# #C# # # # # #L# #', [700,800,650,900,660,980,745,1022,1090,1120], [690,900,620,1040,600,1130,740,1184,1100,1210], 3, .13, .05);
});

/* ---------- page ---------- */
define('survey-page', `
<style>
:host{display:flex;flex-direction:column;height:100vh;overflow:hidden;background:#fff}
browser-bar,survey-header,section-tabs{flex:none}
main{flex:1;min-height:0;overflow:hidden;position:relative;padding:0 120px 0 56px}
area-map{margin-top:91px}
</style>
<browser-bar></browser-bar>
<survey-header></survey-header>
<section-tabs></section-tabs>
<main><fact-grid></fact-grid><area-map></area-map><suite-panel></suite-panel><line-waves></line-waves></main>`);
</script>
</body>
</html>
